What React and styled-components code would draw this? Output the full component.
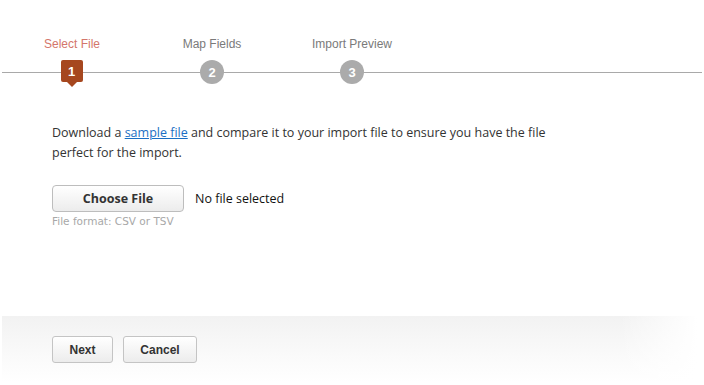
import React from "react";
import styled, { createGlobalStyle } from "styled-components";

const Global = createGlobalStyle`
  html, body { margin: 0; padding: 0; background: #fff; }
  body { font-family: "DejaVu Sans", Verdana, sans-serif; }
`;

const Page = styled.div`
  width: 704px;
  height: 385px;
  overflow: hidden;
  display: flex;
  flex-direction: column;
`;

const Wizard = styled.div`
  margin: 0 2px;
  padding-top: 37px;
  display: flex;
  flex-direction: column;
  gap: 9px;
`;

const StepRow = styled.div`
  display: flex;
  ${(p) =>
    p.$line &&
    `background: linear-gradient(#a9a9a9, #a9a9a9) no-repeat 0 12px / 100% 1px;`}
`;

const StepCell = styled.div`
  width: 140px;
  display: flex;
  justify-content: center;
`;

const StepLabel = styled.span`
  font-family: "Liberation Sans", Arial, sans-serif;
  font-size: 12px;
  line-height: 14px;
  color: ${(p) => (p.$active ? "#d4766b" : "#7a7a7a")};
`;

const Marker = styled.div`
  position: relative;
  width: ${(p) => (p.$active ? "22px" : "24px")};
  height: ${(p) => (p.$active ? "22px" : "24px")};
  margin-left: ${(p) => (p.$active ? "-1px" : "0")};
  border-radius: ${(p) => (p.$active ? "2px" : "50%")};
  background: ${(p) => (p.$active ? "#a6471f" : "#ababab")};
  color: #fff;
  font-family: "Liberation Sans", Arial, sans-serif;
  font-weight: bold;
  font-size: 13px;
  display: flex;
  align-items: center;
  justify-content: center;
  ${(p) =>
    p.$active &&
    `&::after {
      content: "";
      position: absolute;
      left: 50%;
      bottom: -5px;
      margin-left: -5px;
      border-left: 5px solid transparent;
      border-right: 5px solid transparent;
      border-top: 5px solid #a6471f;
    }`}
`;

const Body = styled.div`
  padding: 39px 0 0 52px;
  display: flex;
  flex-direction: column;
  flex: 1;
`;

const Intro = styled.p`
  margin: 0;
  width: 500px;
  font-family: "Open Sans", "DejaVu Sans", sans-serif;
  font-size: 12.5px;
  line-height: 20px;
  color: #333;
`;

const Link = styled.a`
  color: #1a6fc4;
  text-decoration: underline;
`;

const FileRow = styled.div`
  margin-top: 22px;
  display: flex;
  align-items: center;
  gap: 11px;
`;

const ChooseButton = styled.button`
  width: 132px;
  height: 27px;
  border: 1px solid #bdbdbd;
  border-radius: 4px;
  background: linear-gradient(#ffffff, #ececec);
  font-family: "Open Sans", "DejaVu Sans", sans-serif;
  font-weight: bold;
  font-size: 12.5px;
  color: #333;
  padding: 0;
`;

const FileStatus = styled.span`
  font-family: "Open Sans", "DejaVu Sans", sans-serif;
  font-size: 12.5px;
  color: #111;
`;

const Hint = styled.div`
  margin-top: 2px;
  font-size: 10.5px;
  line-height: 14px;
  color: #a8a8a8;
`;

const Footer = styled.div`
  margin: 0 0 3px 2px;
  padding: 20px 0 20px 50px;
  height: 26px;
  display: flex;
  gap: 10px;
  background:
    linear-gradient(to right, rgba(255, 255, 255, 0) 88%, #fff 99%),
    linear-gradient(#f2f2f2, #fafafa 60%, #ffffff 100%);
`;

const ActionButton = styled.button`
  width: ${(p) => p.$w}px;
  height: 27px;
  border: 1px solid #c4c4c4;
  border-radius: 3px;
  background: linear-gradient(#ffffff, #ececec);
  font-family: "Liberation Sans", Arial, sans-serif;
  font-weight: bold;
  font-size: 12px;
  color: #333;
  padding: 0;
`;

const steps = ["Select File", "Map Fields", "Import Preview"];

export default function App() {
  return (
    <Page>
      <Global />
      <Wizard>
        <StepRow>
          {steps.map((s, i) => (
            <StepCell key={s}>
              <StepLabel $active={i === 0}>{s}</StepLabel>
            </StepCell>
          ))}
        </StepRow>
        <StepRow $line>
          {steps.map((s, i) => (
            <StepCell key={s}>
              <Marker $active={i === 0}>{i + 1}</Marker>
            </StepCell>
          ))}
        </StepRow>
      </Wizard>
      <Body>
        <Intro>
          Download a <Link href="#">sample file</Link> and compare it to your
          import file to ensure you have the file perfect for the import.
        </Intro>
        <FileRow>
          <ChooseButton>Choose File</ChooseButton>
          <FileStatus>No file selected</FileStatus>
        </FileRow>
        <Hint>File format: CSV or TSV</Hint>
      </Body>
      <Footer>
        <ActionButton $w={61}>Next</ActionButton>
        <ActionButton $w={74}>Cancel</ActionButton>
      </Footer>
    </Page>
  );
}
